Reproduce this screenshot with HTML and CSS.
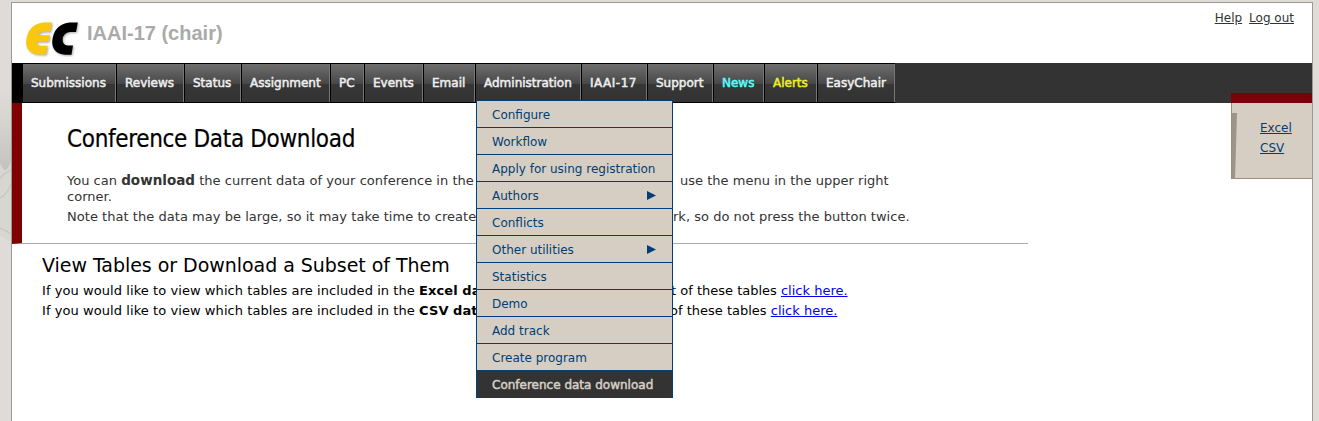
FILE: index.html
```
<!DOCTYPE html>
<html lang="en">
<head>
<meta charset="utf-8">
<title>Conference Data Download</title>
<link rel="stylesheet" href="styles.css">
</head>
<body>
<svg class="swirl" width="11" height="421" viewBox="0 0 11 421" aria-hidden="true">
  <defs>
    <linearGradient id="shade" x1="0" y1="0" x2="0" y2="1">
      <stop offset="0" stop-color="#dfdcd7"/><stop offset=".4" stop-color="#d6d4cf"/>
      <stop offset="1" stop-color="#c4c2be"/>
    </linearGradient>
  </defs>
  <path d="M0 90h11v72q-4 10-7 8L0 164z" fill="url(#shade)"/>
  <path d="M0 164l4 6q4 2 7-8v80L0 236z" fill="#d8d6d1"/>
  <path d="M0 178q6-6 11-8M0 198q7-3 11-14M0 228q6 2 11 6" fill="none" stroke="#c8c6c2" stroke-width="1.2"/>
</svg>
<div class="page">
  <header class="head">
    <svg class="logo" width="56" height="40" viewBox="0 0 56 40" role="img" aria-label="EC">
      <g class="logo-e"><path d="M26.8 2.5L25.3 11.8H19Q14.5 12 12.8 15.2H24.8L23.5 21.8H11.4Q11.6 25.5 16 25.8H22.5L21 34.6H14Q1.2 33.5 1.2 22Q2.2 4.5 18.5 2.5Z"/></g>
      <g class="logo-c"><path d="M52.8 2.5L51 12H45Q38 13 37.6 19.5Q37.6 25 42.5 25.4H48L46.5 34.8H40Q27.4 33.5 27.2 22Q28.2 4.5 44.5 2.5Z"/></g>
    </svg>
    <div class="conf">IAAI-17 (chair)</div>
    <div class="account"><a href="#">Help</a><a href="#">Log out</a></div>
  </header>
  <nav class="bar">
    <a class="tab t1">Submissions</a><a class="tab t2">Reviews</a><a class="tab t3">Status</a><a class="tab t4">Assignment</a><a class="tab t5">PC</a><a class="tab t6">Events</a><a class="tab t7">Email</a>
    <div class="tab t8"><span>Administration</span>
      <ul class="menu">
        <li>Configure</li><li>Workflow</li><li>Apply for using registration</li>
        <li>Authors<i class="arrow"></i></li><li>Conflicts</li>
        <li>Other utilities<i class="arrow"></i></li><li>Statistics</li><li>Demo</li>
        <li>Add track</li><li>Create program</li><li class="current">Conference data download</li>
      </ul>
    </div>
    <a class="tab t9">IAAI-17</a><a class="tab t10">Support</a><a class="tab t11 news">News</a><a class="tab t12 alerts">Alerts</a><a class="tab t13">EasyChair</a>
  </nav>
  <div class="content">
    <main>
      <section class="intro">
        <h1>Conference Data Download</h1>
        <p><span class="lead">You can <b>download</b> the current data of your conference in the</span><span class="rest">use the menu in the upper right</span><br>corner.</p>
        <p><span class="lead2">Note that the data may be large, so it may take time to create</span><span>rk, so do not press the button twice.</span></p>
      </section>
      <section class="tables">
        <h2>View Tables or Download a Subset of Them</h2>
        <p><span class="part">If you would like to view which tables are included in the <b>Excel data</b></span><span>t of these tables <a href="#">click here.</a></span></p>
        <p><span class="part csv">If you would like to view which tables are included in the <b>CSV data</b></span><span>of these tables <a href="#">click here.</a></span></p>
      </section>
    </main>
    <aside class="side">
      <svg class="edge" width="6" height="76" viewBox="0 0 6 76" aria-hidden="true"><path d="M1 10H6L4 76H1Z" fill="#9c9389"/><path d="M0 0H1V76H0Z" fill="#a08c78"/></svg>
      <a href="#">Excel</a><a href="#">CSV</a>
    </aside>
  </div>
</div>
</body>
</html>
```
FILE: styles.css
```
* { box-sizing: border-box; }
body { margin: 0; height: 421px; overflow: hidden; background: #dfdcd7; font: 13px/16px "DejaVu Sans", Verdana, sans-serif; color: #000; }
h1, h2, p, ul { margin: 0; padding: 0; font-weight: normal; }
.swirl { position: absolute; left: 0; top: 0; }
.page { margin: 2px 0 0 11px; width: 1302px; height: 430px; background: #fff; border: 1px solid #999; }
.head { height: 60px; display: flex; padding: 17px 18px 0 13px; }
.logo { flex: none; overflow: visible; filter: drop-shadow(1px 1px 1px #aaa); }
.logo-e { fill: #f9c80e; }
.logo-c { fill: #000; }
.conf { margin: 1px 0 0 6px; font: bold 20px/24px "Liberation Sans", Arial, sans-serif; color: #aaa; white-space: nowrap; }
.account { margin: -10px 0 0 auto; display: flex; gap: 7px; font-size: 12px; }
.account a { color: #333; }
.bar { height: 40px; display: flex; padding-left: 10px; background: linear-gradient(90deg, #000 11px, #333 11px); }
.tab { position: relative; flex: none; height: 40px; padding-left: 8px; border: solid #000; border-width: 1px 0 1px 1px; box-shadow: inset -1px 0 #777; background: linear-gradient(#6e6e6e, #474747 20px, #363636 20px, #333); font-size: 12px; line-height: 38px; color: #eee; -webkit-text-stroke: .5px currentColor; white-space: nowrap; }
.t1 { width: 94px; } .t2 { width: 68px; } .t3 { width: 57px; } .t4 { width: 89px; } .t5 { width: 34px; }
.t6 { width: 59px; } .t7 { width: 52px; } .t8 { width: 106px; } .t9 { width: 66px; letter-spacing: .5px; } .t10 { width: 66px; }
.t11 { width: 51px; } .t12 { width: 53px; } .t13 { width: 78px; }
.news { color: #5ff; }
.alerts { color: #f0f020; }
.menu { position: absolute; z-index: 2; left: 0; top: 36px; width: 197px; list-style: none; border: 1px solid #003f7d; background: #d6cec3; color: #003e75; -webkit-text-stroke: 0; }
.menu li { height: 27px; padding: 1px 16px 0 15px; display: flex; align-items: center; justify-content: space-between; border-bottom: 1px solid #003f7d; line-height: 26px; }
.menu li:last-child { height: 26px; border: 0; }
.menu .current { background: #333; color: #d6cec3; -webkit-text-stroke: .5px currentColor; }
.arrow { width: 9px; height: 9px; background: #003e75; clip-path: polygon(0 0, 100% 50%, 0 100%); }
.content { display: flex; justify-content: space-between; align-items: flex-start; }
main { width: 1016px; }
.intro { height: 141px; padding: 22px 0 0 45px; border-left: 10px solid #800000; border-bottom: 1px solid #aaa; color: #333; white-space: nowrap; }
h1 { margin-bottom: 32px; font: 24px/28px "DejaVu Sans Condensed", "DejaVu Sans", sans-serif; font-stretch: condensed; letter-spacing: -.33px; color: #000; -webkit-text-stroke: .2px currentColor; }
.intro p { margin-top: -12px; padding-bottom: 16px; letter-spacing: .02px; }
.intro b { font-size: 13.5px; line-height: 1; }
.lead { display: inline-block; width: 613px; }
.lead2 { display: inline-block; width: 606px; letter-spacing: .04px; }
.tables { padding: 9px 0 0 30px; white-space: nowrap; }
h2 { margin-bottom: 4px; font-size: 19px; line-height: 24px; letter-spacing: -.04px; }
.tables p { line-height: 20px; }
.part { display: inline-block; width: 629px; letter-spacing: .07px; }
.csv { width: 628px; }
.tables a { color: #00e; }
.side { position: relative; width: 81px; height: 86px; margin-top: -10px; padding: 15px 0 0 29px; border-top: 10px solid #7b0008; border-bottom: 1px solid #a08c78; background: #d6cec3; display: flex; flex-direction: column; font-size: 12px; line-height: 20px; }
.side a { color: #003e75; }
.edge { position: absolute; left: 0; top: 0; }
```
